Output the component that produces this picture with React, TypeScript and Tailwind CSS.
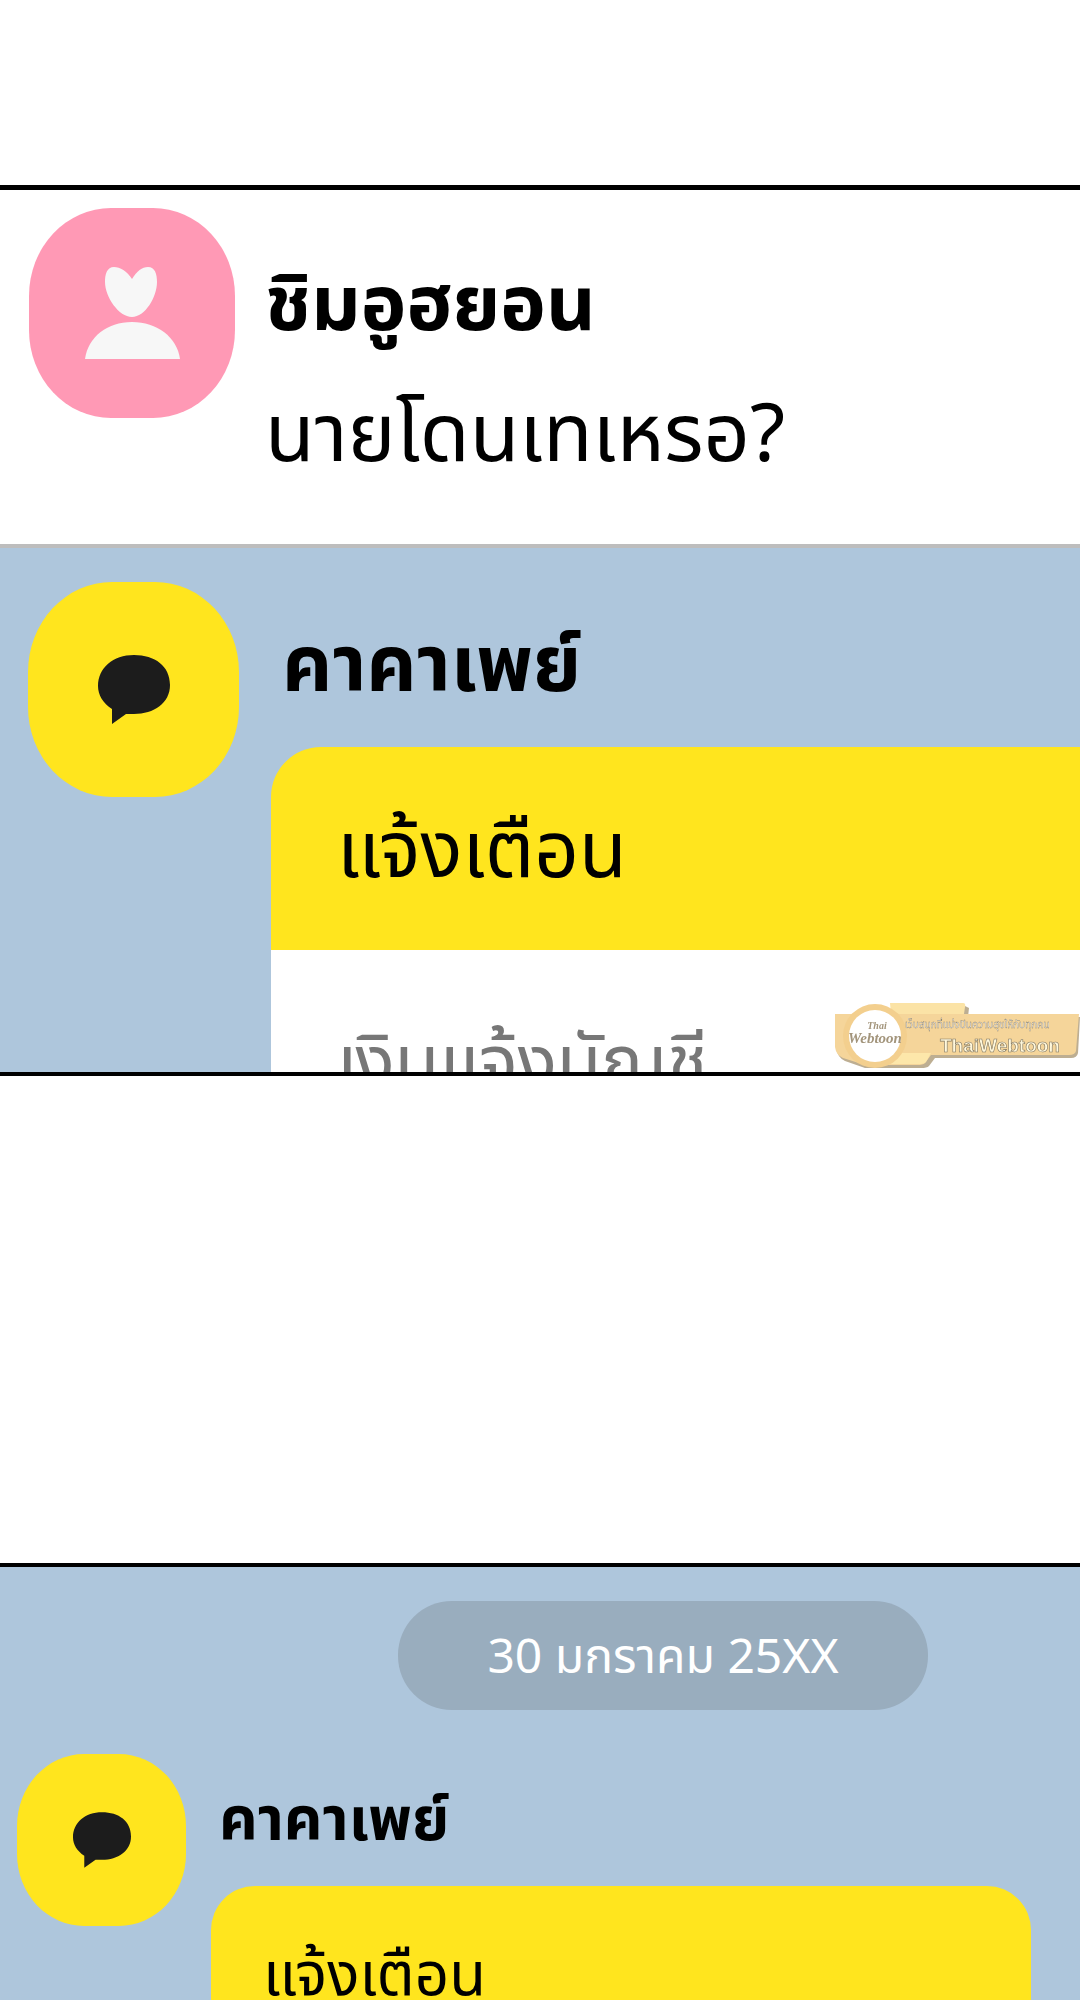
const thai = "font-['Noto_Sans_Thai','Noto_Sans','Liberation_Sans','DejaVu_Sans',sans-serif]";

function PersonIcon() {
  return (
    <svg width="95" height="92" viewBox="0 0 95 92" fill="#f7f7f7">
      <path d="M47 12C42 4 35 0 29 0C22 0 20 7 20 15C20 30 34 50 47 50C60 50 72 30 72 15C72 7 70 0 63 0C57 0 52 4 47 12Z" />
      <path d="M0 92C3 70 22 55 47 55C72 55 92 70 95 92Z" />
    </svg>
  );
}

function BubbleIcon({ className }: { className: string }) {
  return (
    <svg className={className} viewBox="0 0 72 69" fill="#1c1c1c">
      <path d="M36 0C57 0 72 11 72 30C72 48 56 59 36 59L28 59L14 69L14 54C5 48 0 40 0 31C0 13 15 0 36 0Z" />
    </svg>
  );
}

function Watermark() {
  return (
    <div className="absolute right-0 bottom-[3px] w-[245px] h-[66px] blur-[0.4px]">
      <svg width="245" height="66" viewBox="0 0 245 66">
        <path d="M58 3H130L134 5L133 14H245L243 50Q242 55 236 55H100L94 63Q92 65 86 65H30L10 58Q2 54 2 46V14H58Z" fill="#bdae92" />
        <path d="M55 0H128Q131 0 130 4L129 11H56Z" fill="#fbe3a6" />
        <path d="M0 11H244L241 48Q240 52 234 52H96L90 60Q88 62 82 62H30L8 55Q1 52 0 44Z" fill="#f5d59a" />
        <path d="M30 50H96L91 59Q89 61 84 61H34Z" fill="#fde7aa" />
        <circle cx="40" cy="33" r="32" fill="#f3cf8e" />
        <circle cx="40" cy="33" r="26" fill="#ffffff" />
        <text x="42" y="26" textAnchor="middle" fontSize="10" fontStyle="italic" fontWeight="700" fill="#a3957c" fontFamily="Liberation Serif, serif">Thai</text>
        <text x="40" y="40" textAnchor="middle" fontSize="15" fontStyle="italic" fontWeight="700" fill="#a3957c" fontFamily="Liberation Serif, serif">Webtoon</text>
        <text x="70" y="25" fontSize="10" fill="#ffffff" stroke="#7f7560" strokeWidth="0.3" fontFamily="Noto Sans Thai, Noto Sans, sans-serif">เว็บสนุกที่แบ่งปันความสุขให้กับทุกคน</text>
        <text x="105" y="49" fontSize="19" fontWeight="700" fill="#fff8dc" stroke="#7f7560" strokeWidth="0.6" fontFamily="Liberation Sans, sans-serif">ThaiWebtoon</text>
      </svg>
    </div>
  );
}

export default function App() {
  return (
    <div className={`w-[1080px] h-[2000px] overflow-hidden bg-white ${thai}`}>
      <div className="h-[185px]" />

      {/* first panel */}
      <div className="h-[359px] border-t-[5px] border-black flex pl-[29px] pt-[18px]">
        <div className="w-[206px] h-[210px] rounded-[82px/88px] bg-[#ff99b5] flex items-center justify-center">
          <PersonIcon />
        </div>
        <div className="ml-[30px] text-black">
          <p className="mt-[54px] text-[77px] leading-[90px] font-bold">ชิมอูฮยอน</p>
          <p className="mt-[39px] text-[81px] leading-[90px]">นายโดนเทเหรอ?</p>
        </div>
      </div>
      <div className="h-[4px] bg-[#bdbdbd]" />

      {/* second panel */}
      <div className="relative h-[524px] bg-[#aec6dc] overflow-hidden flex pl-[28px] pt-[34px]">
        <div className="w-[211px] h-[215px] rounded-[84px/90px] bg-[#ffe51e] flex items-center justify-center shrink-0">
          <BubbleIcon className="w-[72px] h-[69px]" />
        </div>
        <div className="ml-[32px] flex-1 min-w-0">
          <p className="ml-[11px] mt-[40px] text-[78px] leading-[90px] font-bold text-black">คาคาเพย์</p>
          <div className="mt-[35px] rounded-tl-[50px] overflow-hidden">
            <div className="h-[203px] bg-[#ffe51e] pl-[66px] pt-[61px] text-[78px] leading-[90px] text-black">แจ้งเตือน</div>
            <div className="h-[200px] bg-white pl-[66px] pt-[70px] text-[73px] leading-[90px] text-[#777777]">เงินแจ้งบัญชี</div>
          </div>
        </div>
        <Watermark />
      </div>
      <div className="h-[4px] bg-black" />

      <div className="h-[487px]" />

      {/* third panel */}
      <div className="h-[437px] border-t-[4px] border-black bg-[#aec6dc] overflow-hidden">
        <div className="mt-[34px] ml-[398px] w-[530px] h-[109px] rounded-[54px] bg-[#99adbe] pt-[7px] flex items-center justify-center text-[48px] text-white">
          30 มกราคม 25XX
        </div>
        <div className="mt-[44px] ml-[17px] flex">
          <div className="w-[169px] h-[172px] rounded-[67px/72px] bg-[#ffe51e] flex items-center justify-center shrink-0">
            <BubbleIcon className="w-[58px] h-[56px]" />
          </div>
          <div className="ml-[25px] w-[820px]">
            <p className="ml-[8px] mt-[33px] text-[60px] leading-[70px] font-bold text-black">คาคาเพย์</p>
            <div className="mt-[29px] h-[200px] rounded-t-[44px] bg-[#ffe51e] pl-[52px] pt-[56px] text-[60px] leading-[70px] text-black">แจ้งเตือน</div>
          </div>
        </div>
      </div>
    </div>
  );
}
